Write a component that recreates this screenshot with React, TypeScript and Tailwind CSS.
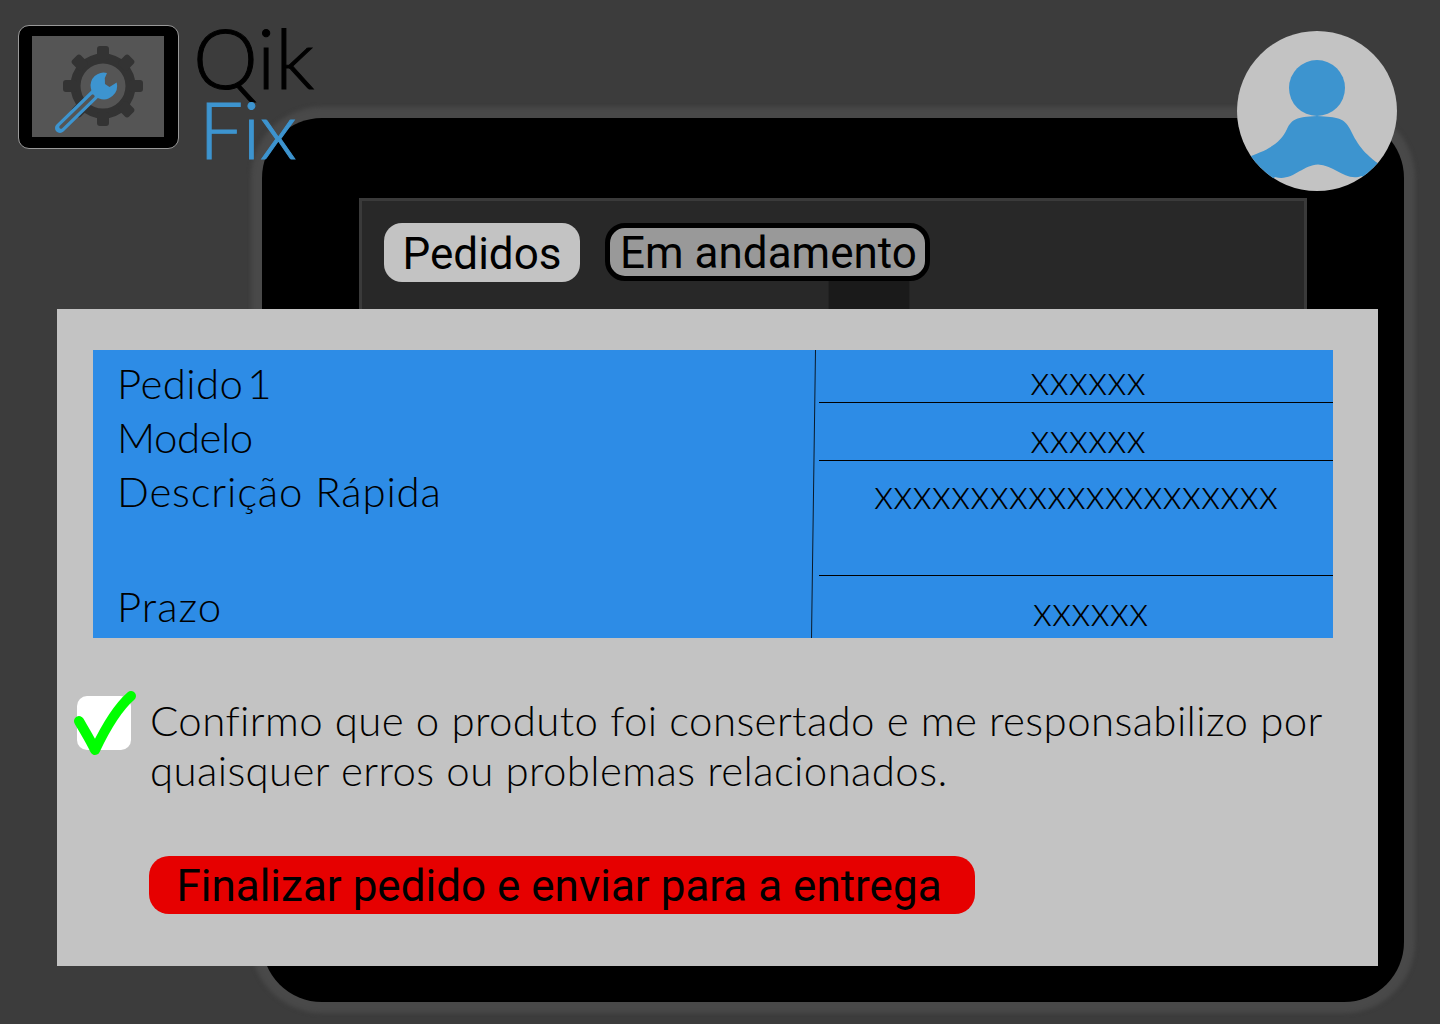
const LIGHT = "font-['Lato','Noto_Sans',sans-serif] font-light";

function Gear() {
  const teeth = [0, 45, 90, 135, 180, 225, 270, 315];
  return (
    <svg width="132" height="101" viewBox="32 36 132 101" className="block">
      <circle cx="103" cy="86" r="27.5" fill="none" stroke="#333333" strokeWidth="10" />
      {teeth.map((a) => (
        <rect key={a} x="97" y="46" width="12" height="14" rx="3" fill="#333333" transform={`rotate(${a} 103 86)`} />
      ))}
      <path d="M60 128 L100 89" stroke="#3d94cf" strokeWidth="10" strokeLinecap="round" />
      <path d="M61 127 L93 96" stroke="#555555" strokeWidth="3.500" strokeLinecap="round" />
      <path d="M107 73 A13 13 0 0 0 90.8 88 A13 13 0 0 0 99 98.5 A13.5 13.5 0 0 0 116.7 82.5 L109.5 87 L105 84 L104.8 78 Z" fill="#3d94cf" />
    </svg>
  );
}

function Avatar() {
  return (
    <svg width="160" height="160" viewBox="1237 31 160 160" className="block">
      <defs>
        <clipPath id="av">
          <circle cx="1317" cy="111" r="80" />
        </clipPath>
      </defs>
      <circle cx="1317" cy="111" r="80" fill="#c3c3c3" />
      <circle cx="1317" cy="88" r="28" fill="#3d94cf" />
      <g clipPath="url(#av)">
        <path
          d="M1245 158 C1268 150 1280 144 1287 129 C1292 119 1296 117 1317 116 C1338 117 1344 118 1350 129 C1358 146 1366 156 1385 168 L1370 190 L1362 176 C1345 182 1335 165 1318 164.500 C1302 165 1292 182 1275 177 L1260 190 Z"
          fill="#3d94cf"
        />
      </g>
    </svg>
  );
}

function Row({ h, children, cls, last }: { h: string; children: string; cls: string; last?: boolean }) {
  return (
    <div className={`${h} ${cls} ${last ? "" : "border-b border-black"} flex justify-center`}>
      <span className="block">{children}</span>
    </div>
  );
}

export default function App() {
  return (
    <div className="relative w-[1440px] h-[1024px] overflow-hidden bg-[#3c3c3c] pt-[118px] pl-[262px]">
      {/* dashboard behind */}
      <div className="w-[1142px] h-[884px] bg-black rounded-[60px] shadow-[0_0_4px_11px_#494949] pt-[80px] pl-[97px]">
        <div className="w-[948px] h-[400px] bg-[#282828] border-t-[3px] border-x-[3px] border-[#3a3a3a] pt-[22px] pl-[22px]">
          <div className="flex gap-[25px] items-start font-['Roboto',sans-serif] text-[44px] text-black">
            <div className="w-[196px] h-[59px] rounded-[18px] bg-[#c3c3c3] flex items-center justify-center leading-none pt-[2px]">
              Pedidos
            </div>
            <div className="flex flex-col items-end">
              <div className="w-[325px] h-[58px] rounded-[20px] border-[5px] border-black bg-[#999999] flex items-center justify-center leading-none whitespace-nowrap pt-[2px] pl-[2px]">
                Em andamento
              </div>
              <div className="w-[82px] h-[40px] mr-[20px] bg-[#1a1a1a] border-x border-[#222222]" />
            </div>
          </div>
        </div>
      </div>

      {/* logo */}
      <div className="absolute left-[18px] top-[25px] flex items-start">
        <div className="w-[161px] h-[124px] rounded-[11px] border border-[#999999] bg-black pl-[13px] pt-[10px]">
          <div className="w-[132px] h-[101px] bg-[#555555]">
            <Gear />
          </div>
        </div>
        <div className="ml-[14px] font-['Lato',sans-serif] font-light -mt-[6px]">
          <div className="text-black text-[82px] leading-[76px] [-webkit-text-stroke:1px_black]">Qik</div>
          <div className="text-[#3d94cf] text-[78px] leading-[70px] ml-[6px] -mt-[1px] [-webkit-text-stroke:1px_#3d94cf]">Fix</div>
        </div>
      </div>

      {/* avatar */}
      <div className="absolute left-[1237px] top-[31px]">
        <Avatar />
      </div>

      {/* modal */}
      <div className={`absolute left-[57px] top-[309px] w-[1321px] h-[657px] bg-[#c3c3c3] pt-[41px] text-black ${LIGHT}`}>
        <div className="relative ml-[36px] w-[1240px] h-[288px] bg-[#2d8ce6] flex text-[42px] tracking-[0.4px]">
          <div className="w-[726px] pl-[24px] pt-[6px] leading-[54px] flex flex-col">
            <div className="[word-spacing:-8px]">Pedido 1</div>
            <div className="tracking-[-0.5px]">Modelo</div>
            <div className="h-[115px] tracking-[0.8px]">Descrição Rápida</div>
            <div className="tracking-[1px]">Prazo</div>
          </div>
          <div className="w-[514px] flex flex-col text-[41px] tracking-normal leading-[60px]">
            <Row h="h-[53px]" cls="pl-[24px]">xxxxxx</Row>
            <Row h="h-[58px]" cls="pl-[24px] pt-[5px]">xxxxxx</Row>
            <Row h="h-[115px]" cls="pt-[3px]">xxxxxxxxxxxxxxxxxxxxx</Row>
            <Row h="h-[62px]" cls="pl-[29px] pt-[5px]" last>xxxxxx</Row>
          </div>
          <svg width="8" height="288" viewBox="0 0 8 288" className="absolute left-[716px] top-0">
            <path d="M6.500 0 L2.500 288" stroke="#0a1a2a" strokeWidth="1" />
          </svg>
        </div>

        <div className="flex mt-[58px] ml-[20px] gap-[19px]">
          <div className="relative w-[54px] h-[54px] rounded-[10px] bg-white shrink-0">
            <svg width="66" height="70" viewBox="0 0 66 70" className="absolute -left-[4px] -top-[6px]">
              <path d="M6 31 C11 40 18 51 22 60 C32 39 43 19 58 6" fill="none" stroke="#00ff00" strokeWidth="10" strokeLinecap="round" strokeLinejoin="round" />
            </svg>
          </div>
          <p className="w-[1195px] text-[42px] tracking-[0.38px] leading-[50px] -mt-[1px]">
            Confirmo que o produto foi consertado e me responsabilizo por quaisquer erros ou problemas relacionados.
          </p>
        </div>

        <div className="ml-[92px] mt-[61px] w-[826px] h-[58px] rounded-[20px] bg-[#e60000] flex items-center justify-center font-['Roboto',sans-serif] font-normal text-[44px] tracking-normal leading-none whitespace-nowrap pr-[6px] pt-[1px]">
          Finalizar pedido e enviar para a entrega
        </div>
      </div>
    </div>
  );
}
